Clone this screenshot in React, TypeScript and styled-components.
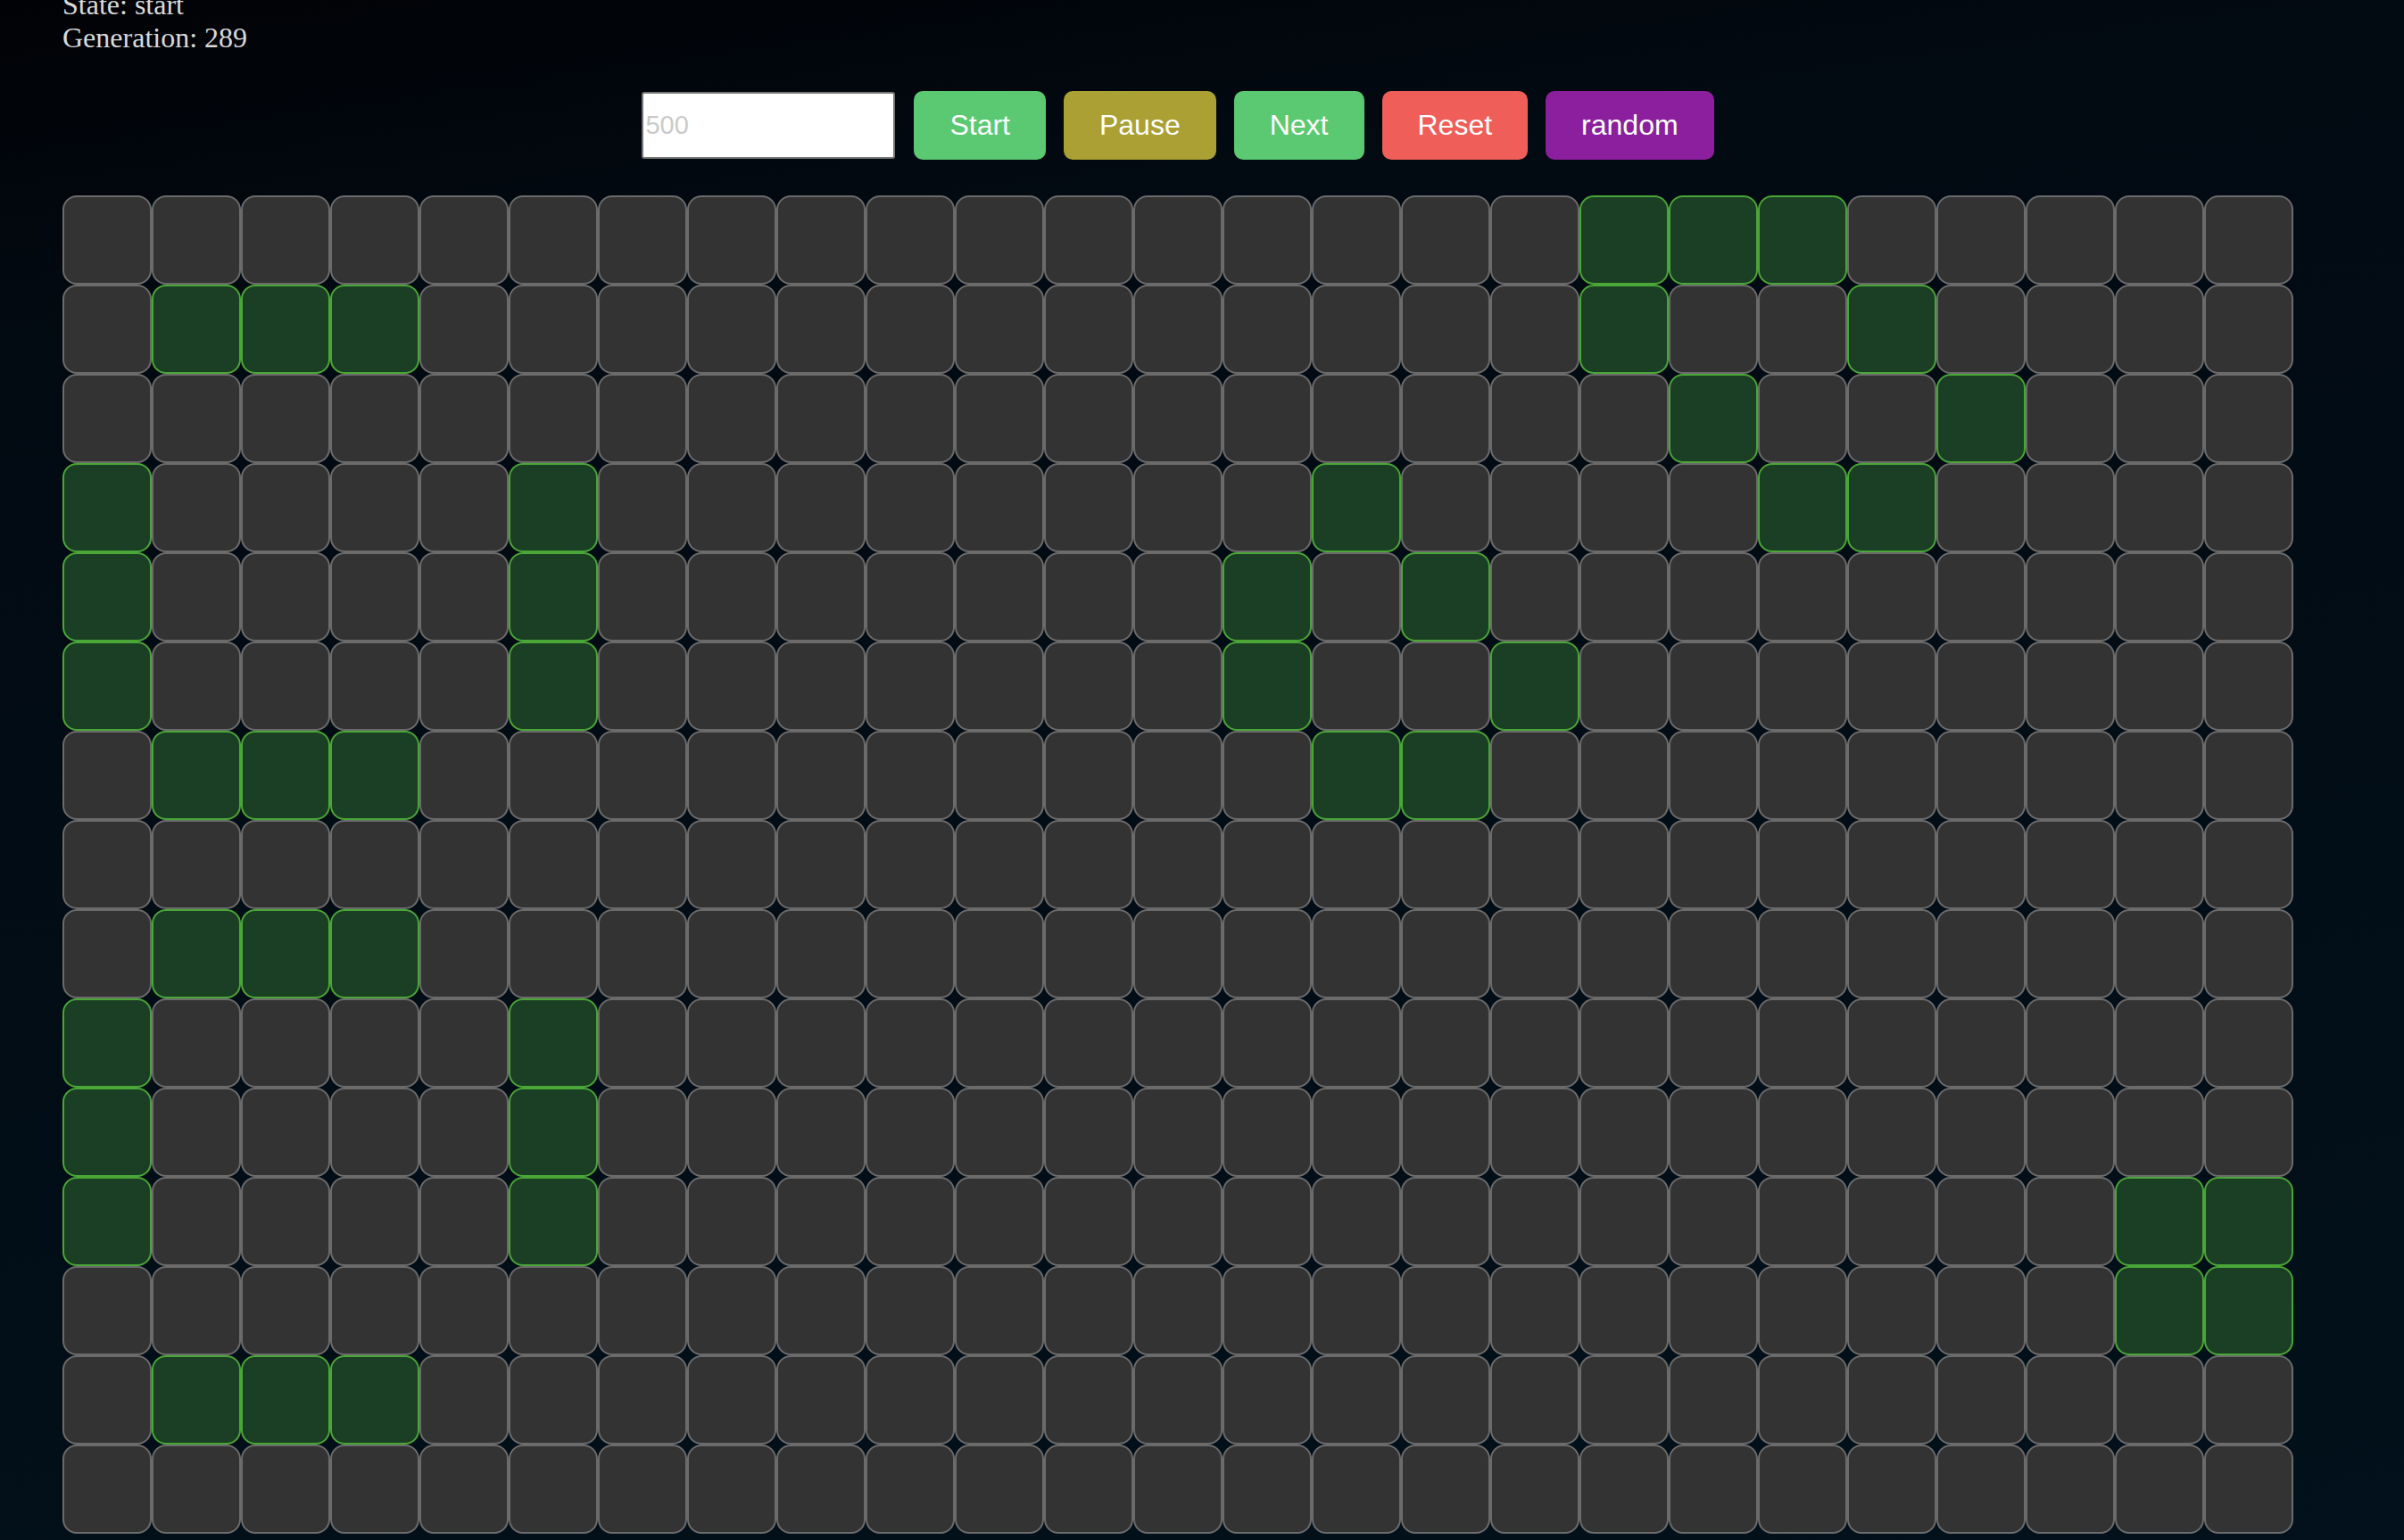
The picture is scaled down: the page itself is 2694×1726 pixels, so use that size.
import React from "react";
import styled, { createGlobalStyle } from "styled-components";

const ROWS = 15;
const COLS = 25;

// live cells per row, by column index
const LIVE: number[][] = [
  [17, 18, 19],
  [1, 2, 3, 17, 20],
  [18, 21],
  [0, 5, 14, 19, 20],
  [0, 5, 13, 15],
  [0, 5, 13, 16],
  [1, 2, 3, 14, 15],
  [],
  [1, 2, 3],
  [0, 5],
  [0, 5],
  [0, 5, 23, 24],
  [23, 24],
  [1, 2, 3],
  [],
];

const GlobalStyle = createGlobalStyle`
  html, body {
    margin: 0;
    padding: 0;
    background: #01080f;
  }
  * {
    box-sizing: border-box;
  }
`;

const Page = styled.main`
  min-height: 100vh;
  overflow: hidden;
  padding: 0 70px;
  background: linear-gradient(172deg, #010205 0%, #020a12 18%, #02111b 100%);
`;

const Board = styled.div`
  width: 2500px;
  display: flex;
  flex-direction: column;
`;

const Info = styled.div`
  margin-top: -13px;
  font-family: "Liberation Serif", "Times New Roman", serif;
  font-size: 32px;
  color: #d9d9d9;
`;

const Line = styled.div`
  line-height: normal;
`;

const Toolbar = styled.div`
  display: flex;
  align-items: center;
  justify-content: center;
  gap: 20px;
  margin: 41px 0 40px;
`;

const CountInput = styled.input`
  width: 284px;
  height: 75px;
  margin-right: 1px;
  padding: 0 2px;
  border: 2px solid #767676;
  border-radius: 3px;
  background: #ffffff;
  font-family: "Liberation Sans", Arial, sans-serif;
  font-size: 29px;
  color: #222;
  outline: none;

  &::placeholder {
    color: #cacaca;
  }
`;

const Button = styled.button<{ $bg: string }>`
  height: 77px;
  padding: 0 40px;
  border: none;
  border-radius: 10px;
  background: ${(p) => p.$bg};
  color: #ffffff;
  font-family: "Liberation Sans", Arial, sans-serif;
  font-size: 32px;
  cursor: pointer;
`;

const Grid = styled.div`
  display: grid;
  grid-template-columns: repeat(${COLS}, 100px);
  grid-auto-rows: 100px;
`;

const Cell = styled.div<{ $alive: boolean }>`
  border: 2px solid ${(p) => (p.$alive ? "#4aa637" : "#6b6b6b")};
  border-radius: 16px;
  background: ${(p) => (p.$alive ? "#1b3f24" : "#333333")};
`;

const App: React.FC = () => {
  const cells = [];
  for (let r = 0; r < ROWS; r++) {
    for (let c = 0; c < COLS; c++) {
      cells.push(<Cell key={`${r}-${c}`} $alive={LIVE[r].includes(c)} />);
    }
  }

  return (
    <>
      <GlobalStyle />
      <Page>
        <Board>
          <Info>
            <Line>State: start</Line>
            <Line>Generation: 289</Line>
          </Info>
          <Toolbar>
            <CountInput type="number" placeholder="500" />
            <Button $bg="#5bc971">Start</Button>
            <Button $bg="#aaa034">Pause</Button>
            <Button $bg="#5bc971">Next</Button>
            <Button $bg="#ef5e59">Reset</Button>
            <Button $bg="#8c1f9d">random</Button>
          </Toolbar>
          <Grid>{cells}</Grid>
        </Board>
      </Page>
    </>
  );
};

export default App;
